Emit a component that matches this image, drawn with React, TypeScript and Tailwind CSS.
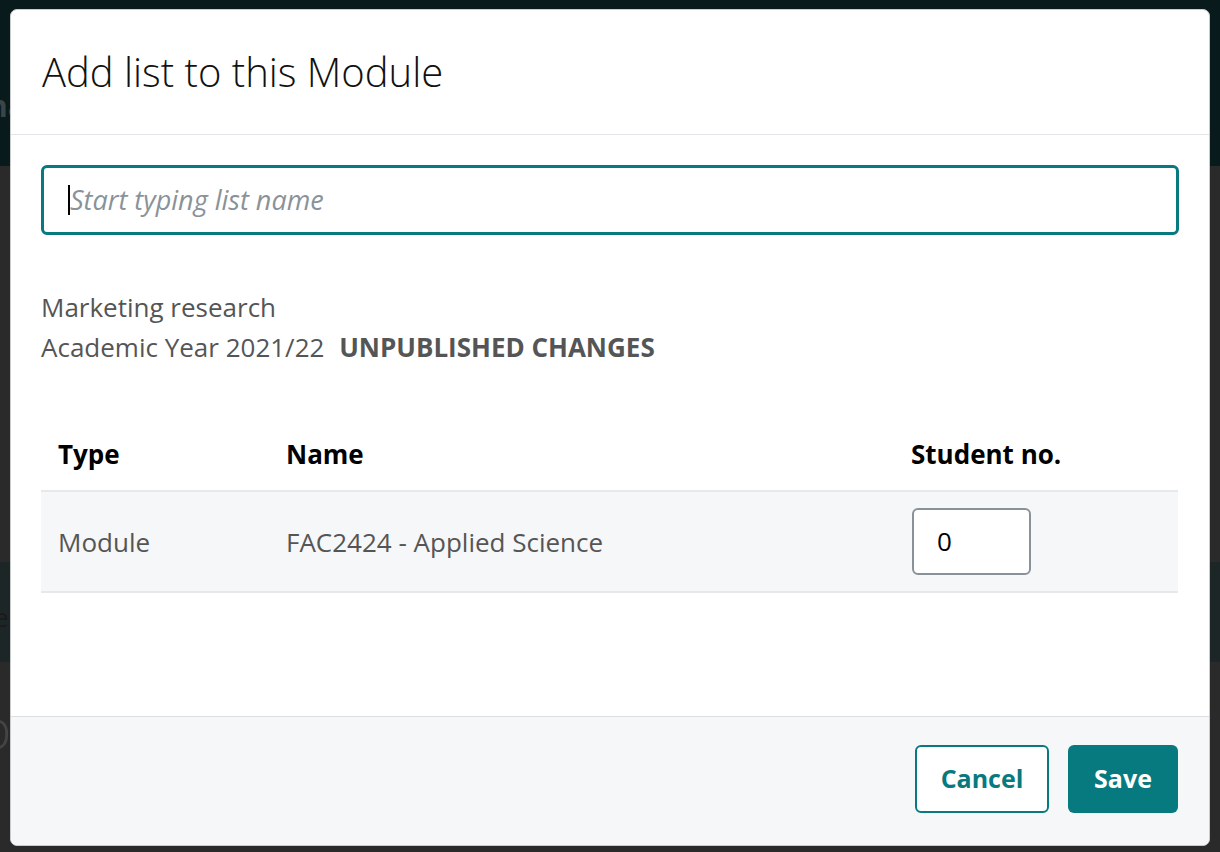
import React from "react";

export default function App() {
  const font = { fontFamily: '"Open Sans", "Noto Sans", sans-serif' };
  return (
    <div className="relative w-[1220px] h-[852px] overflow-hidden bg-[#2a2a2a]" style={font}>
      {/* background page */}
      <div className="h-[166px] bg-[#081a1b] flex items-center pl-0">
        <span className="text-[30px] font-bold text-[#3a4546] -ml-[12px] mt-[44px]">na</span>
      </div>
      <div className="flex flex-col">
        <div className="h-[396px]" />
        <div className="h-[100px] bg-[#1d2627] flex items-center">
          <span className="text-[26px] text-[#1a1a1a] -ml-[6px] mt-[10px]">e</span>
        </div>
        <div className="h-[90px] flex items-center">
          <span className="text-[56px] font-light text-[#444] -ml-[22px] mt-[40px]">p</span>
        </div>
      </div>

      {/* modal */}
      <div className="absolute left-[10px] top-[9px] w-[1200px] h-[837px] bg-white border border-[#c9cbcd] rounded-[7px] flex flex-col overflow-hidden">
        <div className="h-[125px] border-b border-[#e4e5e8] flex items-center pl-[31px]">
          <h1 className="text-[40px] font-light text-[#111]">Add list to this Module</h1>
        </div>
        <div className="flex-1 px-[30px] pt-[30px]">
          <div className="h-[70px] border-[3px] border-[#077a80] rounded-[6px] flex items-center pl-[24px]">
            <span className="w-[2px] h-[30px] bg-black" />
            <span className="text-[27px] italic text-[#8a9299]">Start typing list name</span>
          </div>
          <div className="mt-[52px] text-[26px] leading-[40px] text-[#555]">
            <div>Marketing research</div>
            <div>
              Academic Year 2021/22 <span className="ml-[8px] font-bold uppercase">Unpublished changes</span>
            </div>
          </div>
          <div className="mt-[52px] w-[1137px]">
            <div className="flex h-[73px] items-center border-b-2 border-[#e6e8eb] text-[26px] font-bold text-black">
              <div className="w-[228px] pl-[17px]">Type</div>
              <div className="w-[625px] pl-[17px]">Name</div>
              <div className="pl-[17px]">Student no.</div>
            </div>
            <div className="flex h-[101px] items-center border-b-2 border-[#e6e8eb] bg-[#f6f7f9] text-[26px] text-[#555]">
              <div className="w-[228px] pl-[17px] pt-[2px]">Module</div>
              <div className="w-[625px] pl-[17px] pt-[2px]">FAC2424 - Applied Science</div>
              <div className="pl-[18px]">
                <div className="w-[119px] h-[67px] bg-white border-2 border-[#8a9299] rounded-[6px] flex items-center pl-[23px] text-[26px] text-black">
                  0
                </div>
              </div>
            </div>
          </div>
        </div>
        <div className="h-[129px] border-t border-[#dcdee2] bg-[#f6f7f9] flex justify-end items-start pt-[28px] pr-[31px] gap-[19px]">
          <button className="w-[134px] h-[68px] border-2 border-[#077a80] rounded-[6px] bg-white text-[25px] font-bold text-[#077a80]">
            Cancel
          </button>
          <button className="w-[110px] h-[68px] rounded-[6px] bg-[#077a80] text-[25px] font-bold text-white">
            Save
          </button>
        </div>
      </div>
    </div>
  );
}
